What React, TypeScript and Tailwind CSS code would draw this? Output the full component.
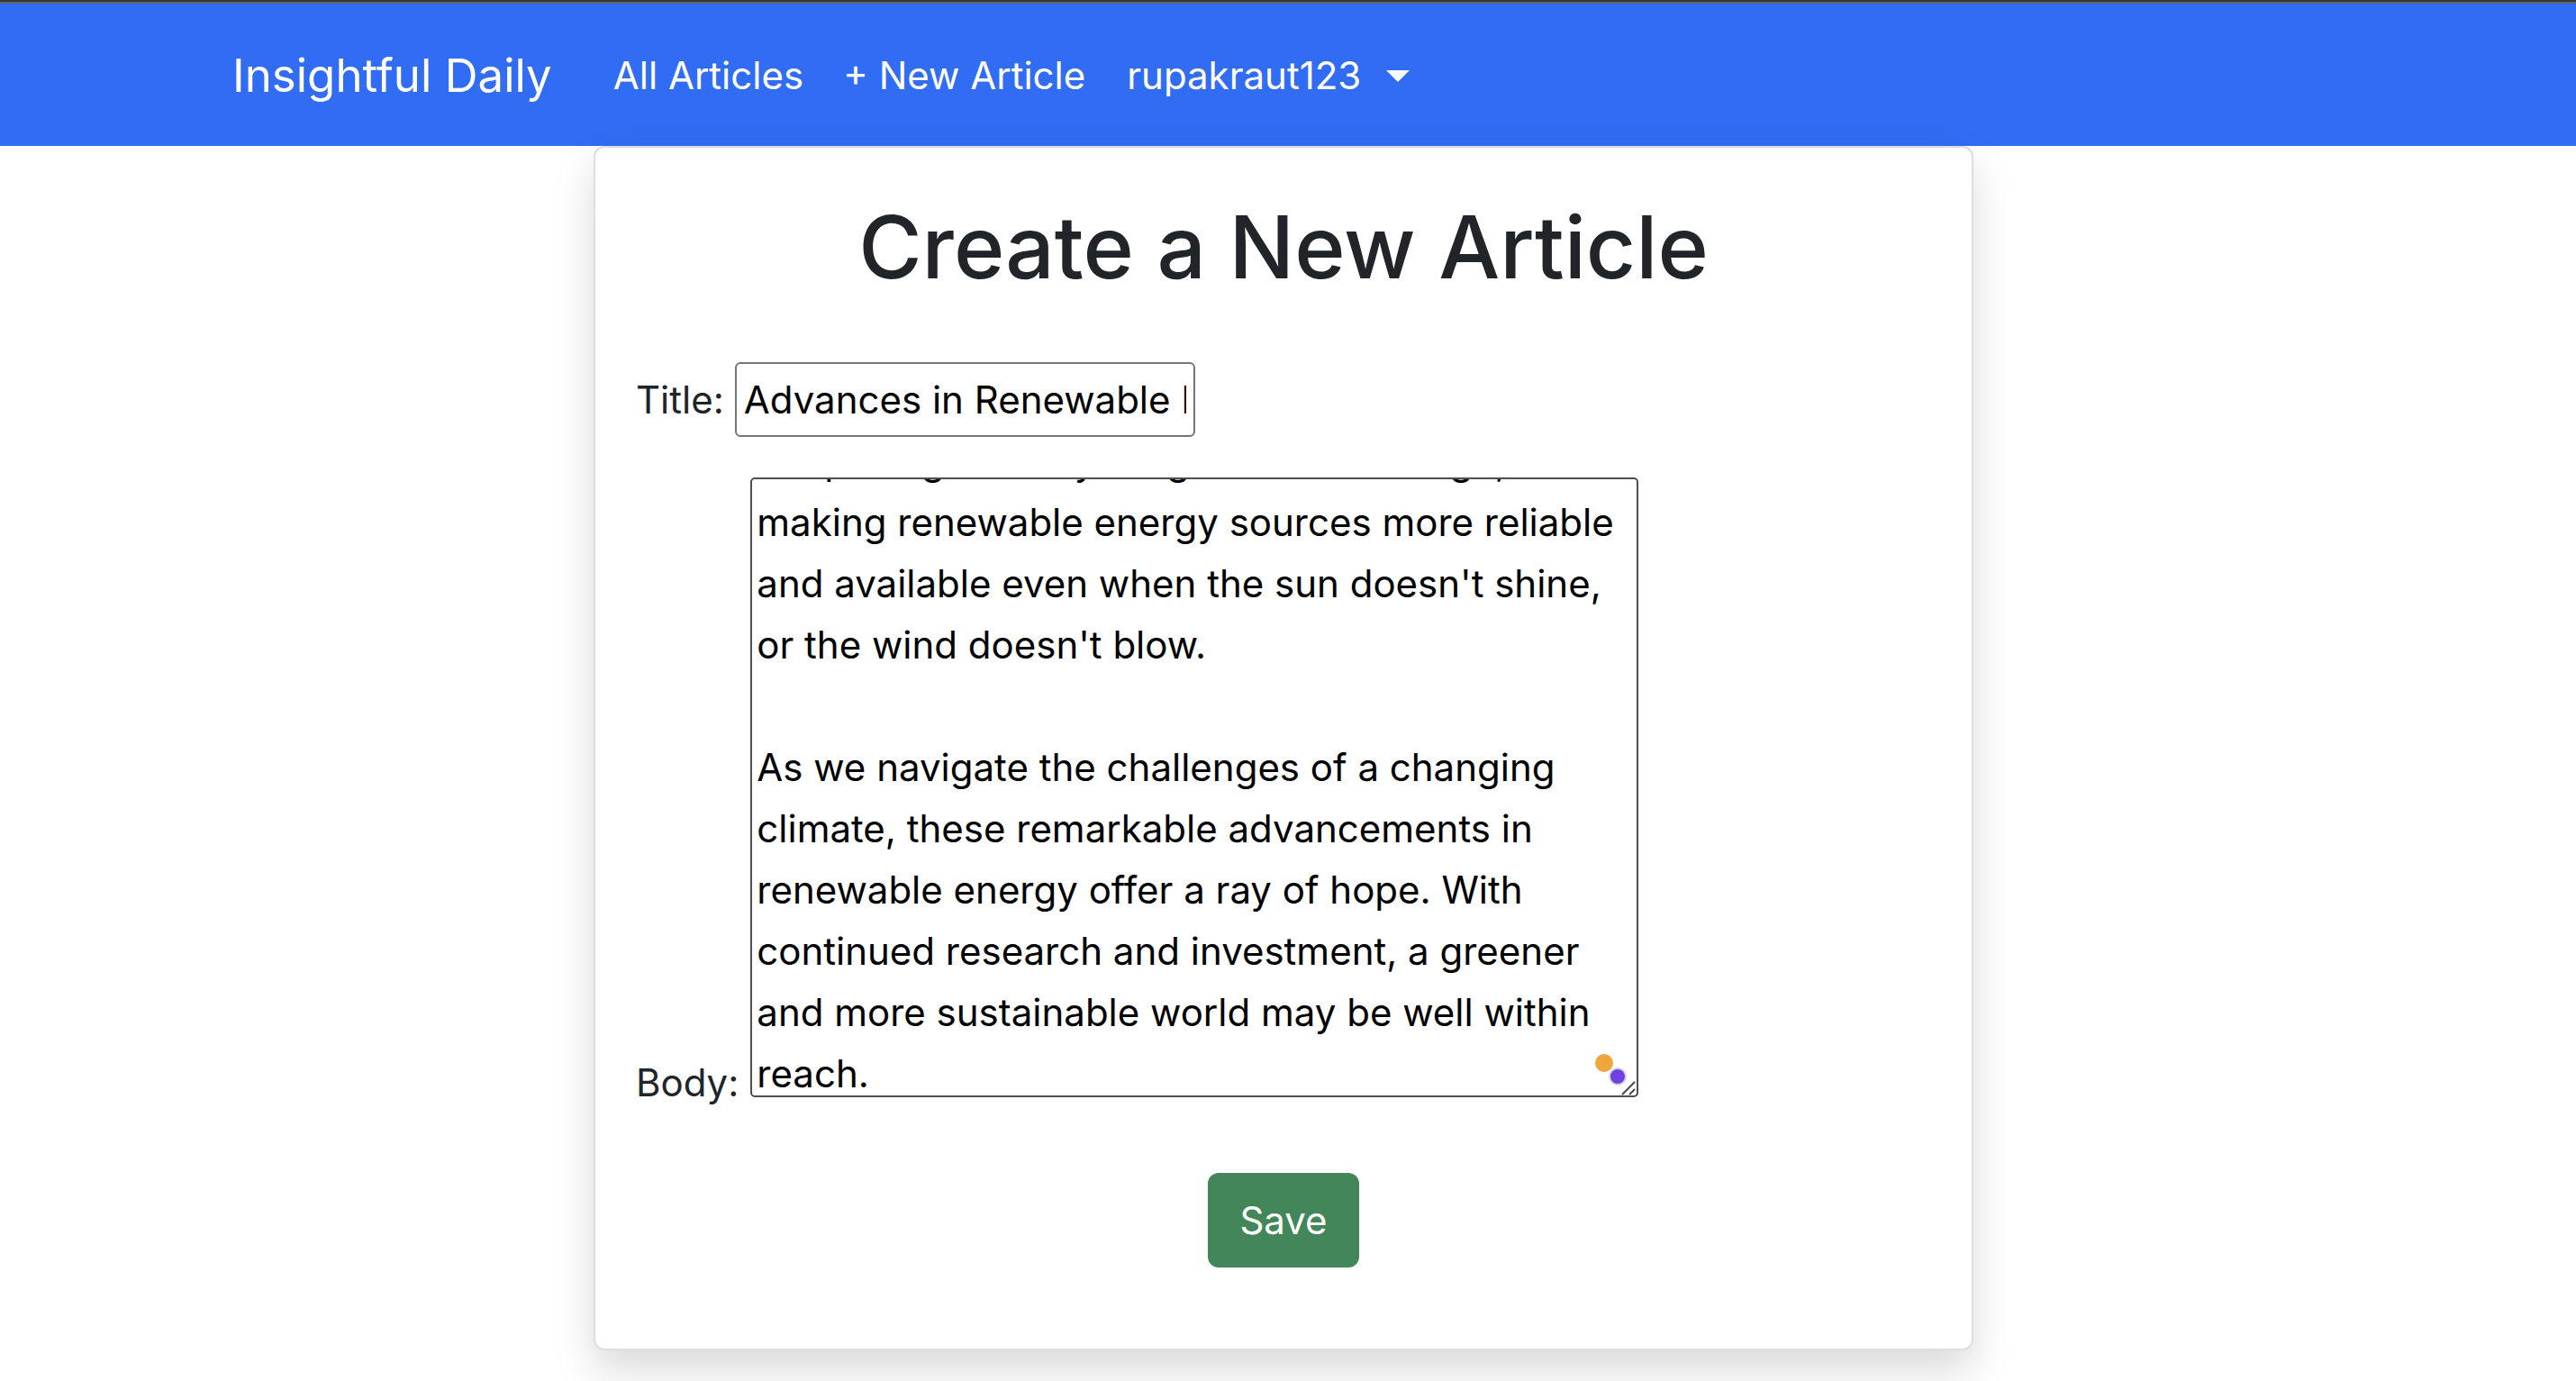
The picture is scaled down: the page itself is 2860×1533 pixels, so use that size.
import { useEffect, useRef, useState } from "react";

const articleBody = `Breakthroughs in battery technology
are paving the way for grid-scale storage, making renewable energy sources more reliable and available even when the sun doesn't shine, or the wind doesn't blow.

As we navigate the challenges of a changing climate, these remarkable advancements in renewable energy offer a ray of hope. With continued research and investment, a greener and more sustainable world may be well within reach.`;

function Navbar() {
  return (
    <nav className="flex h-[162px] items-center border-t-2 border-[#36373b] bg-[#316cf4] pl-[258px] text-white shadow-[inset_0_2px_#636466]">
      <a href="#" className="mr-[46px] pt-1 text-[51px] leading-[84px]">
        Insightful Daily
      </a>
      <div className="flex items-center pt-1 text-[42px] leading-[68px]">
        <a href="#" className="px-[22px]">All Articles</a>
        <a href="#" className="px-[22px]">+ New Article</a>
        <button type="button" className="flex items-center px-[24px]">
          rupakraut123
          <svg className="ml-7" width="26" height="13" viewBox="0 0 26 13" aria-hidden="true">
            <path d="M0 0H26L13 13Z" fill="currentColor" />
          </svg>
        </button>
      </div>
    </nav>
  );
}

export default function App() {
  const bodyRef = useRef<HTMLTextAreaElement>(null);
  const [title, setTitle] = useState("Advances in Renewable Energy");
  const [body, setBody] = useState(articleBody);

  useEffect(() => {
    const el = bodyRef.current;
    if (el) el.scrollTop = el.scrollHeight - el.clientHeight - 14;
  }, []);

  return (
    <div className="min-h-screen bg-white font-['Inter',sans-serif] text-[#212529]">
      <Navbar />
      <main className="pr-[10px] pb-8">
        <form
          className="mx-auto w-full max-w-[1532px] rounded-xl border-2 border-[#dedede] bg-white px-[45px] pt-[52px] pb-[90px] text-[42px] leading-[68px] shadow-[0_22px_45px_rgba(0,0,0,0.15)]"
          onSubmit={(e) => e.preventDefault()}
        >
          <h1 className="mb-[70px] text-center text-[96px] leading-[116px] font-medium">Create a New Article</h1>
          <div className="mb-[45px] flex items-center gap-3">
            <label htmlFor="title">Title:</label>
            <input
              id="title"
              type="text"
              value={title}
              onChange={(e) => setTitle(e.target.value)}
              className="h-[83px] w-[511px] rounded-[6px] border-2 border-[#767676] px-[8px] text-black"
            />
          </div>
          <div className="flex items-end gap-[13px]">
            <label htmlFor="body" className="-mb-[18px]">Body:</label>
            <div className="relative">
              <textarea
                id="body"
                ref={bodyRef}
                value={body}
                onChange={(e) => setBody(e.target.value)}
                className="block h-[688px] w-[986px] resize-none overflow-hidden rounded-[5px] border-2 border-[#4f4f4f] px-[5px] py-[4px] text-black"
              />
              <svg className="absolute right-0 bottom-0" width="60" height="60" viewBox="0 0 60 60" aria-hidden="true">
                <circle cx="22" cy="22" r="10" fill="#f0a63c" />
                <circle cx="37" cy="37" r="10" fill="#d5d3de" />
                <circle cx="37" cy="37" r="8" fill="#7040e0" />
                <path d="M42 57L56 43M50 57L56 51" stroke="#4a4a4a" strokeWidth="2" />
              </svg>
            </div>
          </div>
          <div className="mt-[84px] flex justify-center">
            <button type="submit" className="h-[105px] w-[168px] rounded-xl bg-[#42865a] text-white">
              Save
            </button>
          </div>
        </form>
      </main>
    </div>
  );
}
